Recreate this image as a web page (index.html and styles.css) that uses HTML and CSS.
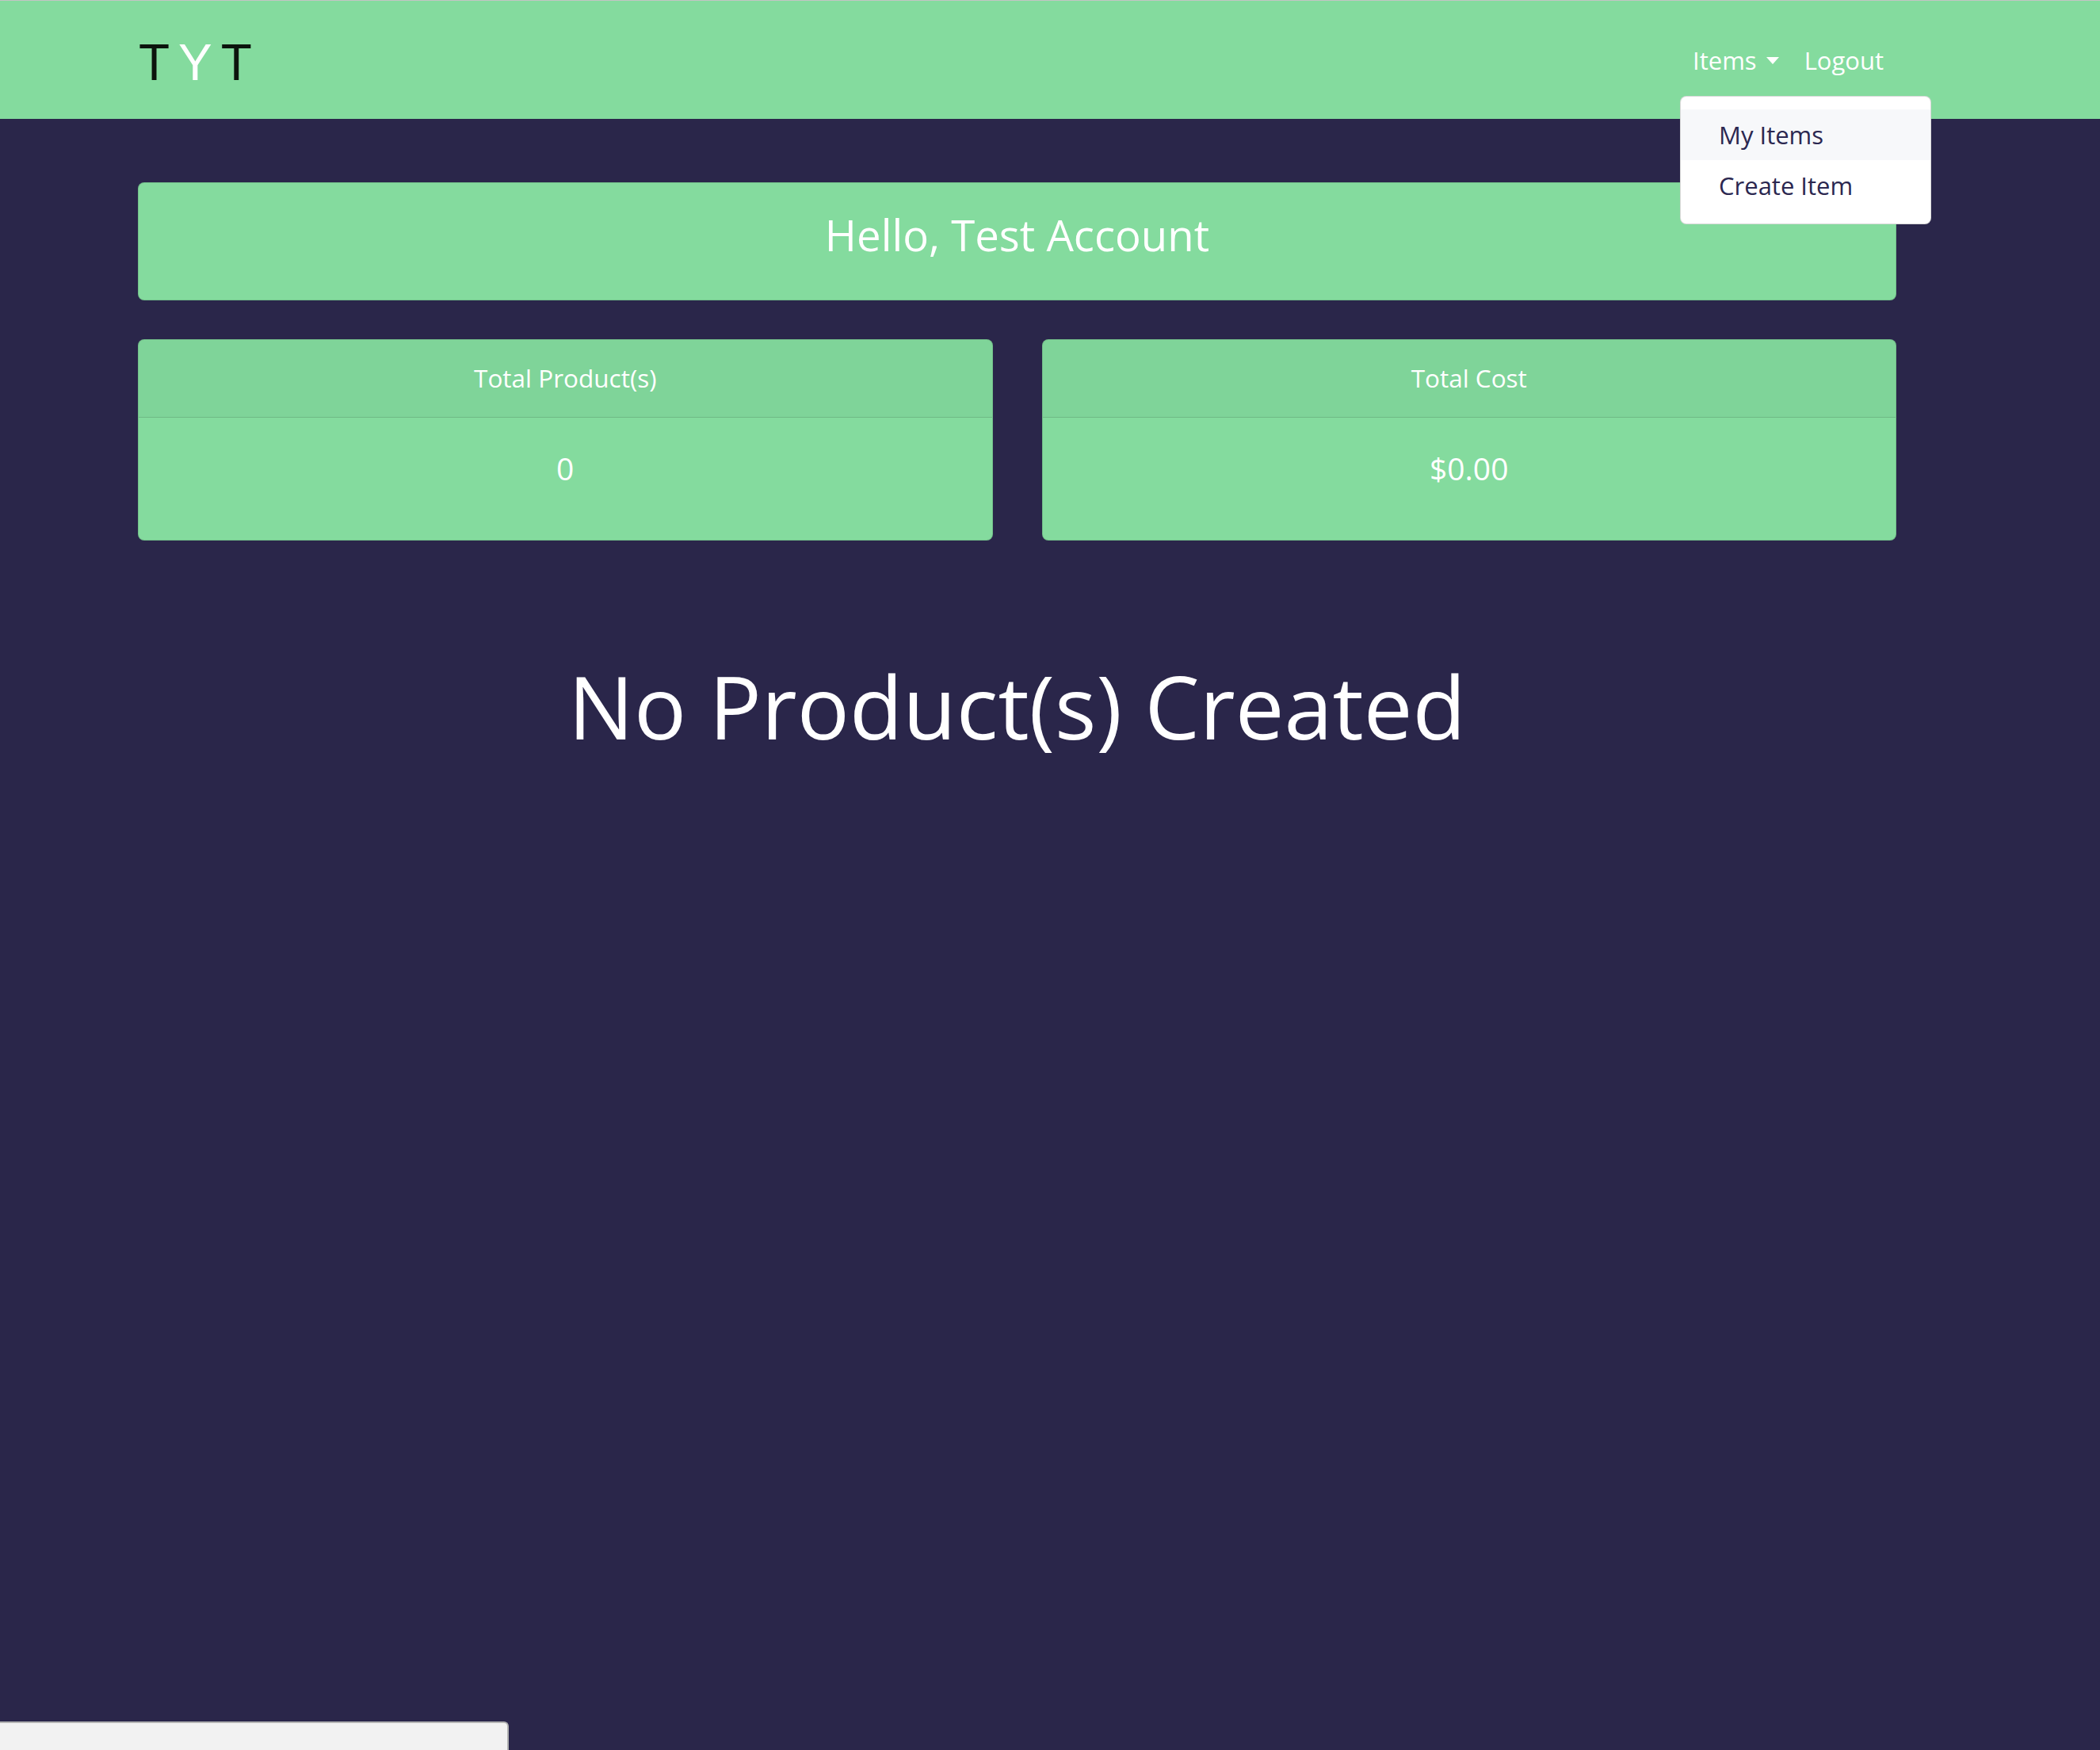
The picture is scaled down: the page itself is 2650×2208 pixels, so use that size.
FILE: index.html
```html
<!DOCTYPE html>
<html lang="en">
<head>
<meta charset="utf-8">
<title>TYT</title>
<link rel="stylesheet" href="styles.css">
</head>
<body>
<nav class="navbar">
  <div class="nav-inner">
    <a class="brand" href="#"><span class="brand-dark">T</span><span class="brand-light">Y</span><span class="brand-dark">T</span></a>
    <ul class="nav-links">
      <li class="nav-item dropdown">
        <a class="nav-link" href="#">Items<span class="caret"></span></a>
        <div class="dropdown-menu">
          <a class="dropdown-item active" href="#">My Items</a>
          <a class="dropdown-item" href="#">Create Item</a>
        </div>
      </li>
      <li class="nav-item"><a class="nav-link" href="#">Logout</a></li>
    </ul>
  </div>
</nav>

<main class="container">
  <section class="card hello-card">
    <h3 class="hello-title">Hello, Test Account</h3>
  </section>

  <div class="stats">
    <section class="card stat-card">
      <div class="card-header">Total Product(s)</div>
      <div class="card-body"><h5 class="stat-value">0</h5></div>
    </section>
    <section class="card stat-card">
      <div class="card-header">Total Cost</div>
      <div class="card-body"><h5 class="stat-value">$0.00</h5></div>
    </section>
  </div>

  <h1 class="empty-title">No Product(s) Created</h1>
</main>

<div class="status-bar"></div>
</body>
</html>
```

FILE: styles.css
```css
* { box-sizing: border-box; }

html, body {
  margin: 0;
  padding: 0;
}

body {
  background: #2a264a;
  font-family: "Open Sans", "Noto Sans", sans-serif;
  font-weight: 500;
  color: #ffffff;
  min-height: 2208px;
}

a { text-decoration: none; }

.navbar {
  background: #84db9e;
  border-top: 1px solid #c4c4c4;
  height: 150px;
  display: flex;
  align-items: center;
}

.nav-inner {
  margin-left: 174px;
  width: 2219px;
  display: flex;
  justify-content: space-between;
  align-items: center;
}

.brand {
  font-family: "Liberation Sans", Arial, sans-serif;
  font-weight: 400;
  font-size: 64px;
  line-height: 64px;
  letter-spacing: 11px;
  padding-top: 6px;
  margin-left: 1px;
}

.brand-dark { color: #0c140d; }
.brand-light { color: #ffffff; }

.nav-links {
  list-style: none;
  margin: 0;
  padding: 0;
  display: flex;
}

.nav-item { position: relative; }

.nav-link {
  display: flex;
  align-items: center;
  padding: 16px 16px;
  font-size: 31px;
  line-height: 48px;
  color: #ffffff;
}

.caret {
  display: inline-block;
  margin-left: 12px;
  margin-top: 2px;
  width: 0;
  height: 0;
  border-top: 9px solid #ffffff;
  border-left: 8px solid transparent;
  border-right: 8px solid transparent;
}

.dropdown-menu {
  position: absolute;
  top: 100%;
  left: 0;
  margin-top: 5px;
  width: 317px;
  background: #ffffff;
  border: 1px solid rgba(0, 0, 0, 0.15);
  border-radius: 8px;
  padding: 16px 0;
  z-index: 10;
}

.dropdown-item {
  display: block;
  padding: 8px 48px;
  font-size: 31px;
  line-height: 48px;
  color: #2b2750;
  white-space: nowrap;
}

.dropdown-item.active { background: #f7f8fa; }

.container {
  margin-left: 174px;
  width: 2219px;
  padding-top: 80px;
}

.card {
  background: #84db9e;
  border: 1px solid rgba(0, 0, 0, 0.125);
  border-radius: 8px;
  overflow: hidden;
}

.hello-card { padding: 32px; }

.hello-title {
  margin: 0 0 16px;
  font-size: 54.5px;
  line-height: 67px;
  font-weight: 500;
  text-align: center;
  color: #ffffff;
}

.stats {
  margin-top: 49px;
  display: grid;
  grid-template-columns: 1fr 1fr;
  column-gap: 62px;
}

.card-header {
  background: rgba(0, 0, 0, 0.03);
  border-bottom: 1px solid rgba(0, 0, 0, 0.125);
  padding: 24px 40px 25px;
  font-size: 31.5px;
  line-height: 48px;
  text-align: center;
}

.card-body {
  padding: 40px 40px 50px;
  text-align: center;
}

.stat-value {
  margin: 0 0 16px;
  font-size: 39px;
  line-height: 48px;
  font-weight: 500;
}

.empty-title {
  margin: 141px 0 0;
  font-size: 110px;
  line-height: 134px;
  font-weight: 500;
  text-align: center;
}

.status-bar {
  position: fixed;
  left: 0;
  bottom: 0;
  width: 642px;
  height: 36px;
  background: #f2f2f2;
  border-top: 2px solid #b3b3b3;
  border-right: 2px solid #b3b3b3;
  border-top-right-radius: 6px;
}
```
